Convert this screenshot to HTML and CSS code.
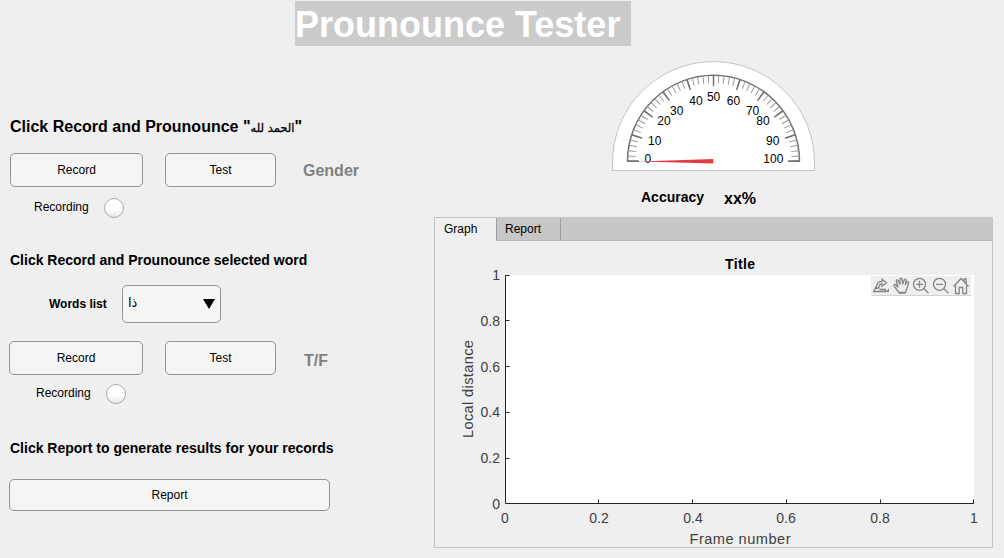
FILE: index.html
```html
<!DOCTYPE html>
<html lang="en">
<head>
<meta charset="utf-8">
<title>Prounounce Tester</title>
<link rel="stylesheet" href="styles.css">
</head>
<body>
<header class="header"><h1 class="title">Prounounce Tester</h1></header>
<main class="main">
  <section class="controls">
    <h2 class="heading heading-lg">Click Record and Prounounce "<span class="arabic" lang="ar">الحمد لله</span>"</h2>
    <div class="row row-first">
      <button class="btn record">Record</button>
      <button class="btn test">Test</button>
      <span class="result">Gender</span>
    </div>
    <div class="lamp-row"><span>Recording</span><i class="lamp"></i></div>
    <h2 class="heading heading-word">Click Record and Prounounce selected word</h2>
    <div class="words">
      <span class="words-label">Words list</span>
      <div class="select"><span class="arabic-option" lang="ar">ذا</span>
        <svg width="12" height="10" viewBox="0 0 12 10"><path d="M0 0H12L6 10Z"/></svg>
      </div>
    </div>
    <div class="row row-second">
      <button class="btn record wide">Record</button>
      <button class="btn test">Test</button>
      <span class="result tf">T/F</span>
    </div>
    <div class="lamp-row lamp-second"><span>Recording</span><i class="lamp"></i></div>
    <h2 class="heading heading-report">Click Report to generate results for your records</h2>
    <button class="btn report">Report</button>
  </section>

  <section class="results">
    <svg class="gauge" width="204" height="111" viewBox="612 61 204 111">
      <path class="gauge-face" d="M612.5 170.5V162.5A101 101 0 0 1 814.5 162.5V170.5Z"/>
      <path class="gauge-arc" d="M627.5 161.3A86 86 0 0 1 799.5 161.3"/>
      <path class="gauge-minor" pathLength="500" d="M631.5 161.3A82 82 0 0 1 795.5 161.3"/>
      <path class="gauge-major" pathLength="500" d="M633 161.3A80.5 80.5 0 0 1 794 161.3"/>
      <path class="gauge-ends" d="M627 161.3H639M788 161.3H800"/>
      <g class="gauge-text">
        <text x="647.8" y="163">0</text><text x="654.7" y="145">10</text>
        <text x="664" y="125">20</text><text x="676.7" y="115">30</text>
        <text x="696" y="105">40</text><text x="713.6" y="101">50</text>
        <text x="733.4" y="104.500">60</text><text x="752.6" y="115">70</text>
        <text x="763" y="125">80</text><text x="772.8" y="145">90</text>
        <text x="773.3" y="163">100</text>
      </g>
      <path class="needle" d="M639 161.500L713.300 159V163.500Z"/>
    </svg>
    <div class="accuracy"><span class="accuracy-label">Accuracy</span><span class="accuracy-value">xx%</span></div>
    <div class="panel">
      <nav class="tabs"><span class="tab active">Graph</span><span class="tab">Report</span></nav>
      <svg class="chart" width="557" height="306" viewBox="435 241 557 306">
        <rect class="plot" x="505" y="275" width="469" height="229"/>
        <path class="axis" d="M505.500 275V503.500H974M505 275.500H509.500M505 320.500H509.500M505 366.500H509.500M505 412.500H509.500M505 458.500H509.500M598.500 504V499.500M692.500 504V499.500M786.500 504V499.500M880.500 504V499.500M973.500 504V499.500"/>
        <text class="chart-title" x="740" y="269" textLength="30">Title</text>
        <g class="ylabels">
          <text x="500" y="280">1</text><text x="500" y="326">0.8</text><text x="500" y="372">0.6</text>
          <text x="500" y="417">0.4</text><text x="500" y="463">0.2</text><text x="500" y="509">0</text>
        </g>
        <g class="xlabels">
          <text x="505" y="523">0</text><text x="599" y="523">0.2</text><text x="693" y="523">0.4</text>
          <text x="786" y="523">0.6</text><text x="880" y="523">0.8</text><text x="974" y="523">1</text>
        </g>
        <text class="axis-name" x="740" y="544" textLength="101">Frame number</text>
        <text class="axis-name" transform="translate(473 389) rotate(-90)" textLength="98">Local distance</text>
        <rect class="toolbar" x="871" y="276" width="100" height="19"/>
        <path class="toolbar-edge" d="M871 295.500H971"/>
        <g class="icon">
          <path d="M876 286.500L873.700 291.500H885.500V289.500H879.500M876.500 288.500C876 283.500 878.500 281.500 882 281.500V279.300L886.500 282.800L882 286.200V284C879.500 284 878.500 285.500 879 288Z"/>
          <path class="fill" d="M889 288.500V292H885.500Z"/>
          <path d="M899 292.500L894.300 286.300C893.200 284.700 894.700 283.800 895.800 285L898 287.300L896.300 281.300C896 279.500 897.700 279.300 898.200 280.800L900 284.500V279.500C900 277.800 902.100 277.800 902.300 279.500L902.600 284.300L904.300 280C904.900 278.500 906.500 279.200 906.100 280.800L905.200 285L906.600 282.500C907.400 281.200 909.100 282 908.500 283.500L905.500 292.500ZM899 293H905.500"/>
          <circle cx="919.500" cy="284.300" r="6"/><path d="M916 284.300H923M919.500 280.800V287.800M924 288.800L928.500 293.300"/>
          <circle cx="939.500" cy="284.300" r="6"/><path d="M936 284.300H943M944 288.800L948.500 293.300"/>
          <path d="M953.500 286.500L961 278.500L968.500 286.500M955.500 285.500V293.500H959.200V287.500H962.800V293.500H966.500V285.500M964 281.500V279H966.200V283.500"/>
        </g>
      </svg>
    </div>
  </section>
</main>
</body>
</html>
```
FILE: styles.css
```css
* { box-sizing: border-box; }
body {
  margin: 0;
  width: 1004px;
  height: 558px;
  overflow: hidden;
  background: #efefef;
  color: #000;
  font: 12px/16px "Liberation Sans", Arial, sans-serif;
}
.header { height: 61px; padding: 1px 0 0 295px; }
.title {
  width: 336px;
  height: 45px;
  margin: 0;
  background: #cbcbcb;
  color: #fff;
  font-size: 36px;
  line-height: 47px;
  white-space: nowrap;
}
.main { display: flex; }
.controls { width: 434px; padding: 56px 0 0 9px; }
.heading { margin: 0 0 0 1px; font-size: 14px; line-height: 20px; white-space: nowrap; }
.heading-lg { font-size: 16px; height: 20px; }
.arabic { font: 11.5px/16px "DejaVu Sans", sans-serif; -webkit-text-stroke: .3px #000; }
.row { display: flex; height: 34px; }
.row-first { margin: 16px 0 0; padding-left: 1px; }
.btn {
  height: 34px;
  padding: 0;
  border: 1px solid #949494;
  border-radius: 5px;
  background: #f5f5f5;
  color: #000;
  font: inherit;
}
.record { width: 133px; margin-right: 22px; }
.record.wide { width: 134px; }
.test { width: 111px; }
.result { margin-left: 27px; color: #808080; font-size: 16px; font-weight: bold; line-height: 36px; }
.result.tf { margin-left: 28px; line-height: 40px; }
.lamp-row { display: flex; align-items: center; height: 22px; gap: 15px; margin-top: 10px; padding-left: 25px; }
.lamp-row span { padding-bottom: 2px; }
.lamp-second { margin-top: 8px; padding-left: 27px; }
.lamp {
  width: 20px;
  height: 20px;
  border: 1px solid #aaa;
  border-radius: 50%;
  background: linear-gradient(#fff 60%, #e6e6e6);
}
.heading-word { margin-top: 31px; }
.words { display: flex; align-items: center; height: 38px; margin-top: 15px; padding-left: 40px; }
.words-label { width: 73px; font-weight: bold; white-space: nowrap; }
.select {
  display: flex;
  align-items: center;
  justify-content: space-between;
  width: 99px;
  height: 38px;
  padding: 0 5px;
  border: 1px solid #949494;
  border-radius: 5px;
  background: #f5f5f5;
}
.arabic-option { padding-bottom: 3px; font: 13px/16px "DejaVu Sans", sans-serif; }
.row-second { margin-top: 18px; }
.heading-report { margin-top: 33px; }
.report { display: block; width: 321px; height: 32px; margin-top: 21px; }
.results { width: 559px; }
.gauge { display: block; margin-left: 178px; }
.gauge-face { fill: #fff; stroke: #c4c4c4; }
.gauge-arc { fill: none; stroke: #737373; stroke-width: 1.5; }
.gauge-minor { fill: none; stroke: #999; stroke-width: 8; stroke-dasharray: 1.9 8.1; stroke-dashoffset: .95; }
.gauge-major { fill: none; stroke: #707070; stroke-width: 11; stroke-dasharray: 3 47; stroke-dashoffset: 1.5; }
.gauge-ends { stroke: #707070; stroke-width: 1.4; }
.gauge-text { font-size: 12px; text-anchor: middle; }
.needle { fill: #e03c42; }
.accuracy { display: flex; height: 45px; padding: 16px 0 0 207px; font-weight: bold; }
.accuracy-label { width: 83px; font-size: 14px; line-height: 19px; }
.accuracy-value { font-size: 16px; line-height: 21px; }
.panel { width: 559px; height: 331px; border: 1px solid #c4c4c4; }
.tabs { display: flex; height: 23px; background: #c7c7c7; border-bottom: 1px solid #b9b9b9; }
.tab { width: 64px; height: 22px; padding-left: 8px; border-right: 1px solid #a0a0a0; line-height: 22px; }
.tab.active { width: 62px; height: 23px; padding-left: 9px; background: #efefef; }
.chart { display: block; }
.plot { fill: #fff; }
.axis { fill: none; stroke: #262626; }
.chart-title { font-size: 14px; font-weight: bold; text-anchor: middle; }
.ylabels, .xlabels { fill: #404040; font-size: 14px; text-anchor: end; }
.xlabels { text-anchor: middle; }
.axis-name { fill: #404040; font-size: 14.6px; text-anchor: middle; }
.toolbar { fill: #efefef; }
.toolbar-edge { stroke: #d2d2d2; }
.icon { fill: none; stroke: #858585; stroke-width: 1.3; }
.icon .fill { fill: #808080; stroke: none; }
```
